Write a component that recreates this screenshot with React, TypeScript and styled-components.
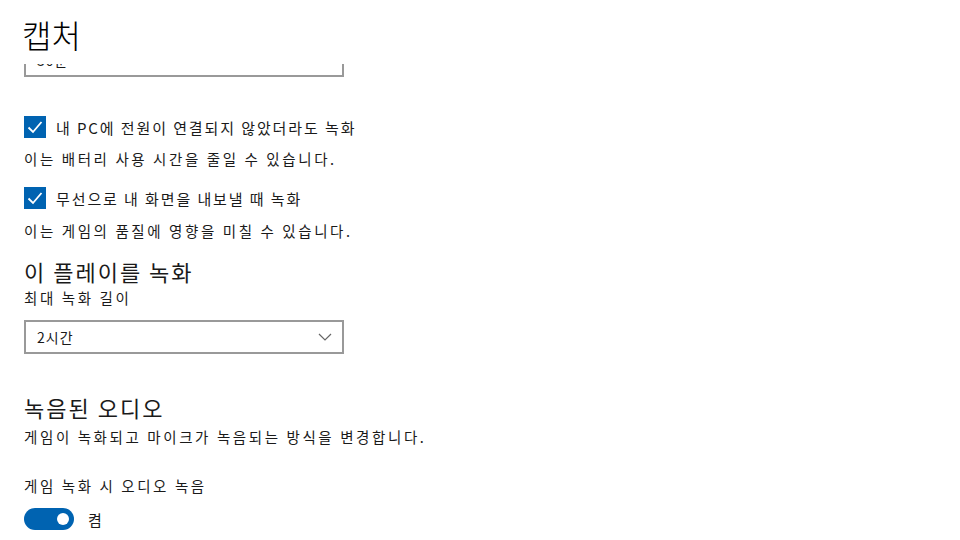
import React, { useLayoutEffect, useRef } from 'react';
import styled, { createGlobalStyle } from 'styled-components';

const GlobalStyle = createGlobalStyle`
    html, body {
        margin: 0;
        padding: 0;
        background: #ffffff;
    }
    body {
        font-family: "Noto Sans CJK KR", "Noto Sans", sans-serif;
        color: #000000;
    }
`;

const Page = styled.div`
    width: 960px;
    height: 540px;
    display: flex;
    flex-direction: column;
    overflow: hidden;
    background: #ffffff;
`;

const Header = styled.div`
    height: 64px;
    flex-shrink: 0;
    padding: 14px 0 0 22px;
    box-sizing: border-box;
`;

const PageTitle = styled.h1`
    margin: 0;
    font-size: 32px;
    line-height: 40px;
    font-weight: 300;
`;

const Viewport = styled.div`
    flex: 1;
    overflow: hidden;
`;

const Content = styled.div`
    padding: 0 0 60px 24px;
    display: flex;
    flex-direction: column;
    align-items: flex-start;
`;

const Select = styled.div<{ $mt?: number }>`
    width: 320px;
    height: 34px;
    box-sizing: border-box;
    border: 2px solid #999999;
    display: flex;
    align-items: center;
    justify-content: space-between;
    padding: 0 10px 0 11px;
    font-size: 14px;
    letter-spacing: 1px;
    color: #1a1a1a;
    margin-top: ${(p) => p.$mt ?? 0}px;
`;

const CheckRow = styled.label<{ $mt: number }>`
    display: flex;
    align-items: center;
    gap: 10px;
    margin-top: ${(p) => p.$mt}px;
    font-size: 15px;
    letter-spacing: 1.9px;
    color: #1a1a1a;
`;

const Box = styled.span`
    width: 22px;
    height: 22px;
    background: #0063b1;
    display: flex;
    align-items: center;
    justify-content: center;
`;

const Hint = styled.p<{ $mt: number }>`
    margin: ${(p) => p.$mt}px 0 0;
    font-size: 14.5px;
    line-height: 20px;
    letter-spacing: 2.6px;
    color: #1a1a1a;
`;

const SectionTitle = styled.h2<{ $mt: number }>`
    margin: ${(p) => p.$mt}px 0 0;
    font-size: 22px;
    line-height: 30px;
    font-weight: 400;
    letter-spacing: 2px;
    color: #1a1a1a;
`;

const ToggleRow = styled.div`
    display: flex;
    align-items: center;
    gap: 14px;
    margin-top: 12px;
    font-size: 15px;
    color: #1a1a1a;
`;

const Track = styled.span`
    width: 50px;
    height: 22px;
    border-radius: 11px;
    background: #0063b1;
    display: flex;
    align-items: center;
    justify-content: flex-end;
    padding-right: 5px;
    box-sizing: border-box;
`;

const Knob = styled.span`
    width: 12px;
    height: 12px;
    border-radius: 50%;
    background: #ffffff;
`;

const Check = () => (
    <svg width="18" height="18" viewBox="0 0 18 18">
        <path d="M2.5 9.5 L7 14 L15.5 4" fill="none" stroke="#ffffff" strokeWidth="1.8" />
    </svg>
);

const Chevron = () => (
    <svg width="14" height="8" viewBox="0 0 14 8">
        <path d="M1 1 L7 7 L13 1" fill="none" stroke="#666666" strokeWidth="1.2" />
    </svg>
);

const App = () => {
    const viewport = useRef<HTMLDivElement>(null);

    useLayoutEffect(() => {
        // the list is scrolled a little, so the first dropdown hides under the title
        if (viewport.current) viewport.current.scrollTop = 21;
    }, []);

    return (
        <Page>
            <GlobalStyle />
            <Header>
                <PageTitle>캡처</PageTitle>
            </Header>
            <Viewport ref={viewport}>
                <Content>
                    <Select>
                        <span>30분</span>
                        <Chevron />
                    </Select>
                    <CheckRow $mt={39}>
                        <Box>
                            <Check />
                        </Box>
                        내 PC에 전원이 연결되지 않았더라도 녹화
                    </CheckRow>
                    <Hint $mt={11}>이는 배터리 사용 시간을 줄일 수 있습니다.</Hint>
                    <CheckRow $mt={18}>
                        <Box>
                            <Check />
                        </Box>
                        무선으로 내 화면을 내보낼 때 녹화
                    </CheckRow>
                    <Hint $mt={12}>이는 게임의 품질에 영향을 미칠 수 있습니다.</Hint>
                    <SectionTitle $mt={15}>이 플레이를 녹화</SectionTitle>
                    <Hint $mt={2}>최대 녹화 길이</Hint>
                    <Select $mt={12}>
                        <span>2시간</span>
                        <Chevron />
                    </Select>
                    <SectionTitle $mt={38}>녹음된 오디오</SectionTitle>
                    <Hint $mt={5}>게임이 녹화되고 마이크가 녹음되는 방식을 변경합니다.</Hint>
                    <Hint $mt={29}>게임 녹화 시 오디오 녹음</Hint>
                    <ToggleRow>
                        <Track>
                            <Knob />
                        </Track>
                        켬
                    </ToggleRow>
                </Content>
            </Viewport>
        </Page>
    );
};

export default App;
